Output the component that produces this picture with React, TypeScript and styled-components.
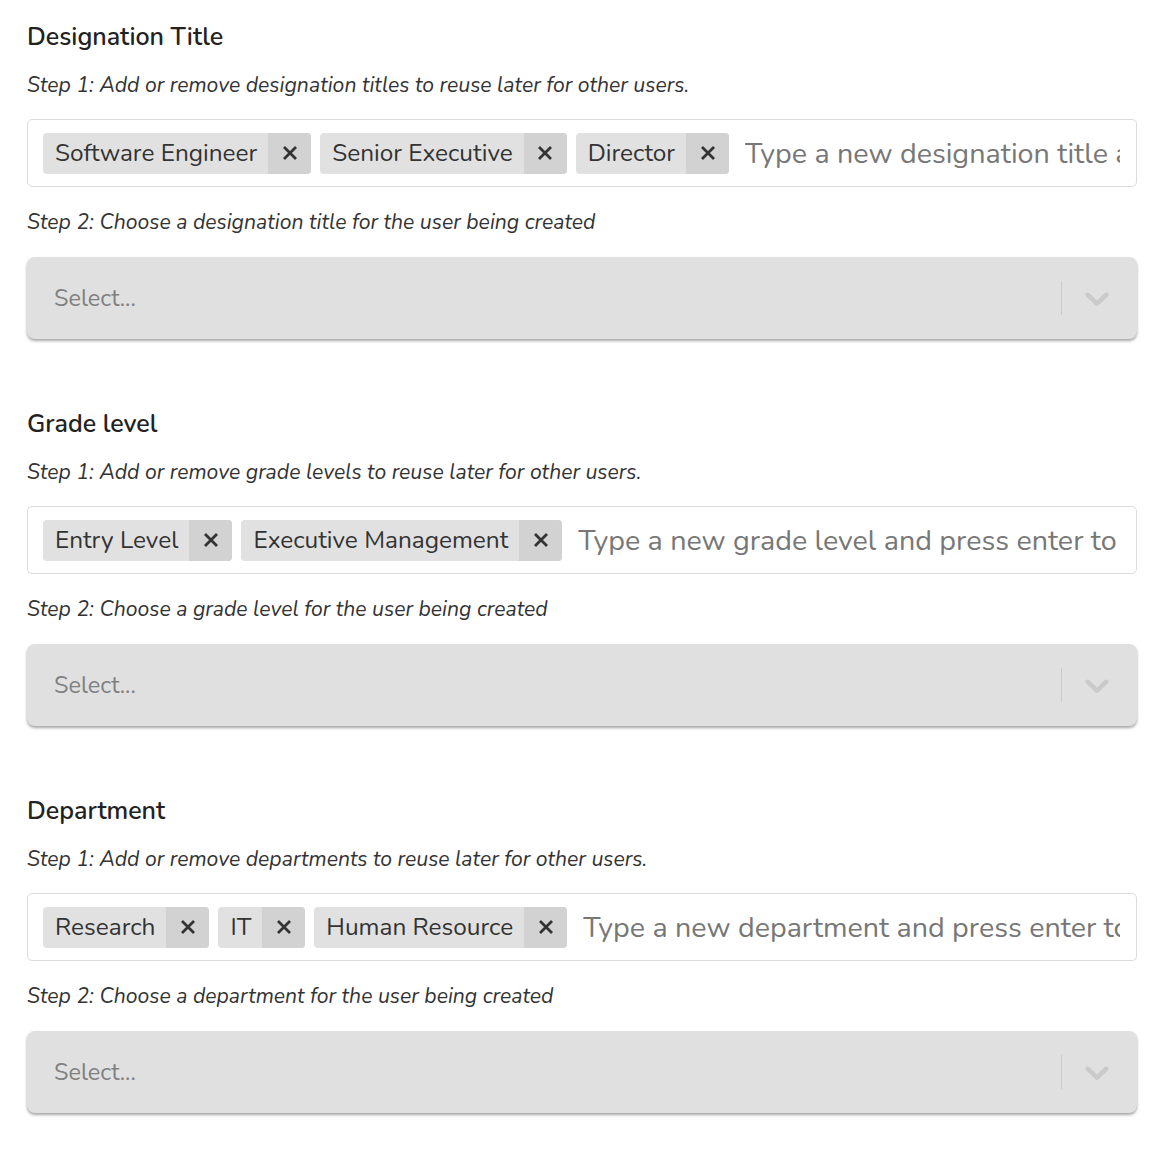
import React from "react";
import styled, { createGlobalStyle } from "styled-components";

const Global = createGlobalStyle`
  html, body { margin: 0; padding: 0; background: #fff; }
  body { font-family: "Nunito", "Lato", "Noto Sans", sans-serif; color: #333; }
  * { box-sizing: border-box; }
`;

const Page = styled.div`
  padding: 0 33px 0 27px;
`;

const Section = styled.section`
  padding-top: 22px;
  padding-bottom: 48px;
`;

const Title = styled.h2`
  margin: 0;
  font-size: 25px;
  line-height: 30px;
  font-weight: 600;
  color: #222;
`;

const Hint = styled.p<{ $gap: number }>`
  margin: ${(p) => p.$gap}px 0 0 0;
  font-size: 21.2px;
  line-height: 26px;
  font-style: italic;
  color: #333;
`;

const TagBox = styled.div`
  margin-top: 21px;
  height: 68px;
  border: 1px solid #dcdcdc;
  border-radius: 5px;
  padding: 0 16px 0 15px;
  display: flex;
  align-items: center;
  gap: 9px;
  overflow: hidden;
`;

const Tag = styled.div`
  display: flex;
  align-items: stretch;
  height: 41px;
  border-radius: 4px;
  background: #e1e1e1;
  overflow: hidden;
  flex-shrink: 0;
`;

const TagLabel = styled.span`
  display: flex;
  align-items: center;
  padding: 0 11px 0 12px;
  font-size: 24.4px;
  color: #333;
  white-space: nowrap;
`;

const TagRemove = styled.span`
  display: flex;
  align-items: center;
  justify-content: center;
  width: 43px;
  background: #d2d2d2;
  color: #333;
`;

const TagInput = styled.input`
  flex: 1;
  min-width: 0;
  border: none;
  outline: none;
  background: transparent;
  font-family: inherit;
  font-size: 28.7px;
  color: #333;
  padding: 0 0 0 7px;
  &::placeholder { color: #777; }
`;

const SelectBox = styled.div`
  margin-top: 22px;
  height: 82px;
  background: #e0e0e0;
  border-radius: 8px;
  box-shadow: 0 2px 3px rgba(0, 0, 0, 0.35);
  display: flex;
  align-items: center;
  padding-left: 27px;
`;

const SelectValue = styled.span`
  flex: 1;
  font-size: 23.5px;
  color: #808080;
`;

const Separator = styled.span`
  width: 1px;
  height: 34px;
  background: #cbcbcb;
`;

const Indicator = styled.span`
  width: 75px;
  padding-right: 6px;
  display: flex;
  align-items: center;
  justify-content: center;
  color: #cacaca;
`;

const XIcon = () => (
  <svg width="16" height="16" viewBox="0 0 16 16">
    <path d="M2 2 L14 14 M14 2 L2 14" stroke="currentColor" strokeWidth="2.8" strokeLinecap="butt" fill="none" />
  </svg>
);

const Chevron = () => (
  <svg width="40" height="40" viewBox="0 0 20 20" fill="currentColor">
    <path d="M4.516 7.548c0.436-0.446 1.043-0.481 1.576 0l3.908 3.747 3.908-3.747c0.533-0.481 1.141-0.446 1.574 0 0.436 0.445 0.408 1.197 0 1.615-0.406 0.418-4.695 4.502-4.695 4.502-0.217 0.223-0.502 0.335-0.787 0.335s-0.57-0.112-0.789-0.335c0 0-4.287-4.084-4.695-4.502s-0.436-1.170 0-1.615z" />
  </svg>
);

type Field = {
  title: string;
  step1: string;
  tags: string[];
  placeholder: string;
  step2: string;
};

const fields: Field[] = [
  {
    title: "Designation Title",
    step1: "Add or remove designation titles to reuse later for other users.",
    tags: ["Software Engineer", "Senior Executive", "Director"],
    placeholder: "Type a new designation title and press enter to add",
    step2: "Choose a designation title for the user being created",
  },
  {
    title: "Grade level",
    step1: "Add or remove grade levels to reuse later for other users.",
    tags: ["Entry Level", "Executive Management"],
    placeholder: "Type a new grade level and press enter to add",
    step2: "Choose a grade level for the user being created",
  },
  {
    title: "Department",
    step1: "Add or remove departments to reuse later for other users.",
    tags: ["Research", "IT", "Human Resource"],
    placeholder: "Type a new department and press enter to add",
    step2: "Choose a department for the user being created",
  },
];

export default function App() {
  return (
    <Page>
      <Global />
      {fields.map((f) => (
        <Section key={f.title}>
          <Title>{f.title}</Title>
          <Hint $gap={20}>Step 1: {f.step1}</Hint>
          <TagBox>
            {f.tags.map((t) => (
              <Tag key={t}>
                <TagLabel>{t}</TagLabel>
                <TagRemove>
                  <XIcon />
                </TagRemove>
              </Tag>
            ))}
            <TagInput placeholder={f.placeholder} />
          </TagBox>
          <Hint $gap={22}>Step 2: {f.step2}</Hint>
          <SelectBox>
            <SelectValue>Select...</SelectValue>
            <Separator />
            <Indicator>
              <Chevron />
            </Indicator>
          </SelectBox>
        </Section>
      ))}
    </Page>
  );
}
